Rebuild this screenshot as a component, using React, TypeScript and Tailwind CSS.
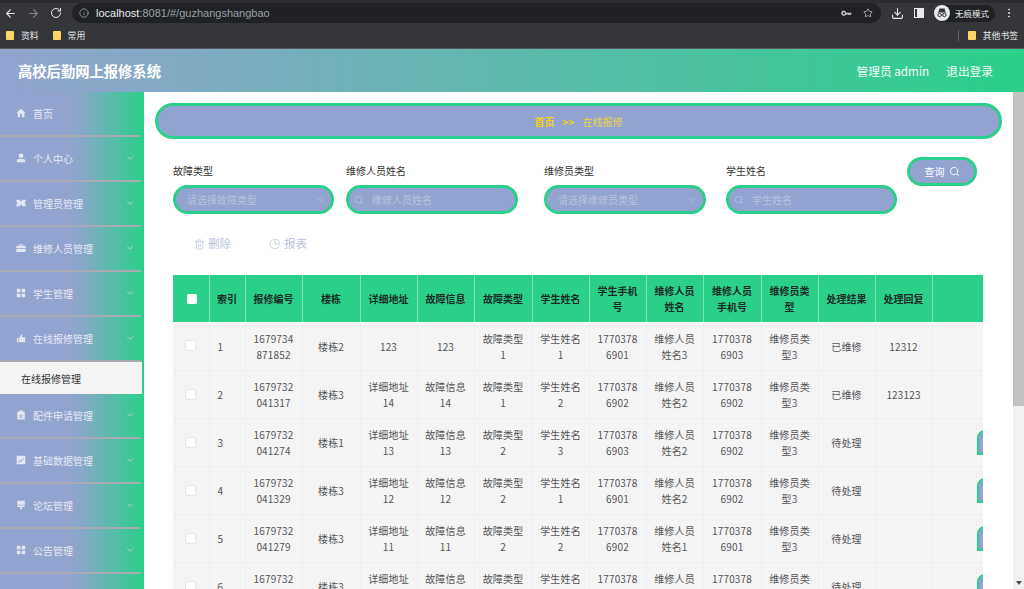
import React from "react";
import {
  ArrowLeft,
  ArrowRight,
  RotateCw,
  Info,
  Star,
  Download,
  EllipsisVertical,
  ChevronDown,
  Search,
  Trash2,
  PieChart,
} from "lucide-react";

const FONT = "font-['Microsoft_YaHei','Noto_Sans_CJK_SC','Noto_Sans',sans-serif]";

// solid little menu icons
const HomeIcon = () => (
  <svg viewBox="0 0 12 12" className="w-[10px] h-[10px] fill-[#e4e7f2]">
    <path d="M6 1 L11.5 6 L10 6 L10 11 L7.2 11 L7.2 7.5 L4.8 7.5 L4.8 11 L2 11 L2 6 L.5 6 Z" />
  </svg>
);
const UserIcon = () => (
  <svg viewBox="0 0 12 12" className="w-[10px] h-[10px] fill-[#e4e7f2]">
    <circle cx="6" cy="3.4" r="2.9" />
    <path d="M1 11 L1 9 Q1 7.2 3 7.2 L9 7.2 Q11 7.2 11 9 L11 11 Z" />
  </svg>
);
const AdminIcon = () => (
  <svg viewBox="0 0 12 12" className="w-[10px] h-[10px] fill-[#e4e7f2]">
    <path d="M0 2 L4 2 L6 4.5 L8 2 L12 2 L10.5 6 L12 10 L8 10 L6 7.5 L4 10 L0 10 L1.5 6 Z" />
  </svg>
);
const CaseIcon = () => (
  <svg viewBox="0 0 12 12" className="w-[10px] h-[10px] fill-[#e4e7f2]">
    <path d="M4 1.5 L8 1.5 L8 3.2 L11.5 3.2 L11.5 6.4 L.5 6.4 L.5 3.2 L4 3.2 Z M5 2.4 L5 3.2 L7 3.2 L7 2.4 Z" fillRule="evenodd" />
    <rect x=".5" y="7.2" width="11" height="3.6" />
  </svg>
);
const GridIcon = () => (
  <svg viewBox="0 0 12 12" className="w-[10px] h-[10px] fill-[#e4e7f2]">
    <rect x="1" y="1" width="4.2" height="4.2" />
    <rect x="6.8" y="1" width="4.2" height="4.2" />
    <rect x="1" y="6.8" width="4.2" height="4.2" />
    <rect x="6.8" y="6.8" width="4.2" height="4.2" />
  </svg>
);
const ThumbIcon = () => (
  <svg viewBox="0 0 12 12" className="w-[10px] h-[10px] fill-[#e4e7f2]">
    <path d="M1 6 L3 6 L3 11 L1 11 Z M3.8 6 L6.5 1.5 L7.6 2.2 L7.2 5 L11 5 L11 11 L3.8 11 Z" />
  </svg>
);
const ClipIcon = () => (
  <svg viewBox="0 0 12 12" className="w-[10px] h-[10px] fill-[#e4e7f2]">
    <path d="M4 .5 L8 .5 L8 2 L10.5 2 L10.5 11.5 L1.5 11.5 L1.5 2 L4 2 Z M4.4 5.4 L6 7 L7.6 5.4 L8.2 6 L6.6 7.6 L8.2 9.2 L7.6 9.8 L6 8.2 L4.4 9.8 L3.8 9.2 L5.4 7.6 L3.8 6 Z" fillRule="evenodd" />
  </svg>
);
const ChartIcon = () => (
  <svg viewBox="0 0 12 12" className="w-[10px] h-[10px] fill-[#e4e7f2]">
    <path d="M.8 1 L11.2 1 L11.2 11 L.8 11 Z M2.5 8.6 L3 9.2 L5 7.2 L6.4 8.2 L9.6 4.6 L9 4 L6.3 7 L5 6 Z" fillRule="evenodd" />
  </svg>
);
const BoardIcon = () => (
  <svg viewBox="0 0 12 12" className="w-[10px] h-[10px] fill-[#e4e7f2]">
    <rect x="1.5" y=".8" width="9" height="5" />
    <rect x="1.5" y="6.6" width="9" height="1.8" />
    <rect x="5" y="8.4" width="2" height="3" />
  </svg>
);

// chrome's saved password key, lying on its side
const KeyIcon = () => (
  <svg viewBox="0 0 12 8" className="w-[11px] h-[7px] ml-auto fill-[#c4c7c5]">
    <path d="M3 .5 A3 3 0 1 0 5.6 5 L7.5 5 L8.5 6 L9.5 5 L10.5 6 L12 4 L10.8 3 L5.6 3 A3 3 0 0 0 3 .5 Z M3 2.5 A1.3 1.3 0 1 1 3 5.1 A1.3 1.3 0 1 1 3 2.5 Z" fillRule="evenodd" />
  </svg>
);

const IncognitoIcon = () => (
  <svg viewBox="0 0 16 16" className="w-[16px] h-[16px]">
    <circle cx="8" cy="8" r="8" fill="#e8eaed" />
    <path d="M5.4 3.6 L10.6 3.6 L11.4 6.8 L13 7.4 L3 7.4 L4.6 6.8 Z" fill="#35363a" />
    <circle cx="5.6" cy="10" r="1.7" fill="none" stroke="#35363a" strokeWidth="1" />
    <circle cx="10.4" cy="10" r="1.7" fill="none" stroke="#35363a" strokeWidth="1" />
    <path d="M7.2 10 L8.8 10" stroke="#35363a" strokeWidth="1" />
  </svg>
);

const menu = [
  { label: "首页", icon: HomeIcon, arrow: false },
  { label: "个人中心", icon: UserIcon, arrow: true },
  { label: "管理员管理", icon: AdminIcon, arrow: true },
  { label: "维修人员管理", icon: CaseIcon, arrow: true },
  { label: "学生管理", icon: GridIcon, arrow: true },
  { label: "在线报修管理", icon: ThumbIcon, arrow: true, sub: "在线报修管理" },
  { label: "配件申请管理", icon: ClipIcon, arrow: true },
  { label: "基础数据管理", icon: ChartIcon, arrow: true },
  { label: "论坛管理", icon: BoardIcon, arrow: true },
  { label: "公告管理", icon: GridIcon, arrow: true },
];

const columns = [
  { w: "w-[57px]", label: "报修编号" },
  { w: "w-[58px]", label: "楼栋" },
  { w: "w-[57px]", label: "详细地址" },
  { w: "w-[57px]", label: "故障信息" },
  { w: "w-[58px]", label: "故障类型" },
  { w: "w-[57px]", label: "学生姓名" },
  { w: "w-[57px]", label: "学生手机号" },
  { w: "w-[57px]", label: "维修人员姓名" },
  { w: "w-[58px]", label: "维修人员手机号" },
  { w: "w-[57px]", label: "维修员类型" },
  { w: "w-[57px]", label: "处理结果" },
  { w: "w-[57px]", label: "处理回复" },
];

const rows = [
  ["1679734871852", "楼栋2", "123", "123", "故障类型1", "学生姓名1", "17703786901", "维修人员姓名3", "17703786903", "维修员类型3", "已维修", "12312"],
  ["1679732041317", "楼栋3", "详细地址14", "故障信息14", "故障类型1", "学生姓名2", "17703786902", "维修人员姓名2", "17703786902", "维修员类型3", "已维修", "123123"],
  ["1679732041274", "楼栋1", "详细地址13", "故障信息13", "故障类型2", "学生姓名3", "17703786903", "维修人员姓名2", "17703786902", "维修员类型3", "待处理", ""],
  ["1679732041329", "楼栋3", "详细地址12", "故障信息12", "故障类型2", "学生姓名1", "17703786901", "维修人员姓名2", "17703786902", "维修员类型3", "待处理", ""],
  ["1679732041279", "楼栋3", "详细地址11", "故障信息11", "故障类型2", "学生姓名2", "17703786902", "维修人员姓名1", "17703786901", "维修员类型3", "待处理", ""],
  ["1679732041226", "楼栋3", "详细地址10", "故障信息10", "故障类型2", "学生姓名1", "17703786901", "维修人员姓名1", "17703786901", "维修员类型3", "待处理", ""],
];

const BrowserBar = () => (
  <div className="h-[49px] shrink-0 bg-[#35363a] flex flex-col border-b border-[#5a5b5f]">
    <div className="h-[3px] bg-[#2b2c30]" />
    <div className="h-[20px] flex items-center pl-[4px] pr-[9px]">
      <ArrowLeft className="w-[13px] h-[13px] text-[#e8eaed]" />
      <ArrowRight className="w-[13px] h-[13px] text-[#85868a] ml-[10px]" />
      <RotateCw className="w-[12px] h-[12px] text-[#e8eaed] ml-[10px]" />
      <div className="ml-[10px] grow h-[20px] rounded-full bg-[#202124] flex items-center pl-[7px] pr-[8px]">
        <Info className="w-[10px] h-[10px] text-[#9aa0a6]" />
        <span className="ml-[7px] text-[11px] text-[#9aa0a6] font-['Liberation_Sans',sans-serif]">
          <span className="text-[#e8eaed]">localhost</span>:8081/#/guzhangshangbao
        </span>
        <KeyIcon />
        <Star className="w-[10px] h-[10px] text-[#c4c7c5] ml-[11px]" />
      </div>
      <Download className="w-[13px] h-[13px] text-[#e8eaed] ml-[10px]" />
      <div className="w-[10px] h-[10px] border border-[#e8eaed] ml-[10px] flex justify-end">
        <div className="w-[6px] bg-[#e8eaed]" />
      </div>
      <div className="ml-[10px] h-[17px] pr-[6px] rounded-full bg-[#202124] flex items-center">
        <IncognitoIcon />
        <span className="ml-[5px] text-[8.5px] text-[#e8eaed]">无痕模式</span>
      </div>
      <EllipsisVertical className="w-[12px] h-[12px] text-[#e8eaed] ml-[8px]" />
    </div>
    <div className="grow flex items-center pl-[6px] pr-[6px] text-[8.8px] text-[#e8eaed]">
      <div className="w-[8px] h-[9px] bg-[#fdd663] rounded-[1px]" />
      <span className="ml-[7px]">资料</span>
      <div className="w-[8px] h-[9px] bg-[#fdd663] rounded-[1px] ml-[14px]" />
      <span className="ml-[7px]">常用</span>
      <div className="ml-auto w-px h-[11px] bg-[#5f6368]" />
      <div className="w-[8px] h-[9px] bg-[#fdd663] rounded-[1px] ml-[9px]" />
      <span className="ml-[7px]">其他书签</span>
    </div>
  </div>
);

const Sidebar = () => (
  <aside className="w-[145px] shrink-0 overflow-hidden border-r border-white bg-[linear-gradient(90deg,#93a3cf_50%,#2ad08a_100%)]">
    {menu.map((item) => (
      <div key={item.label}>
        <div className="h-[45px] pr-[3px]">
          <div className="h-full flex items-center pl-[16px] pr-[6px] pb-[1px] border-b-2 border-[#a9abb3] text-[10px] text-[#e8eaf5]">
            <item.icon />
            <span className="ml-[7px]">{item.label}</span>
            {item.arrow && <ChevronDown className="w-[10px] h-[10px] ml-auto text-[#c9d6dc]" />}
          </div>
        </div>
        {item.sub && (
          <div className="h-[32px] mr-[2px] flex items-center pl-[21px] bg-[#f4f4f5] text-[10px] text-[#333]">
            {item.sub}
          </div>
        )}
      </div>
    ))}
  </aside>
);

const SearchField = ({ label, w, ph, select }: { label: string; w: string; ph: string; select?: boolean }) => (
  <div className={w}>
    <div className="text-[10px] leading-[14px] text-[#333]">{label}</div>
    <div className="mt-[7px] h-[29px] rounded-full border-[3px] border-[#2ad08a] bg-[#93a3cf] flex items-center px-[5px] text-[10px] text-[#b8c2df]">
      {select ? (
        <>
          <span className="ml-[6px]">{ph}</span>
          <ChevronDown className="w-[11px] h-[11px] ml-auto text-[#b8c2df]" />
        </>
      ) : (
        <>
          <Search className="w-[10px] h-[10px] text-[#b8c2df]" />
          <span className="ml-[8px]">{ph}</span>
        </>
      )}
    </div>
  </div>
);

const Checkbox = ({ head }: { head?: boolean }) => (
  <div
    className={`bg-white rounded-[2px] ${
      head ? "ml-[14px] w-[10px] h-[10px]" : "mx-auto w-[11px] h-[11px] border border-[#e4e7ed]"
    }`}
  />
);

export default function App() {
  return (
    <div className={`h-[589px] w-[1024px] overflow-hidden flex flex-col bg-white ${FONT}`}>
      <BrowserBar />

      <header className="h-[43px] shrink-0 flex items-center justify-between pl-[18px] pr-[31px] bg-[linear-gradient(90deg,#93a3cf,#2ad08a)] text-white">
        <div className="text-[14.3px] font-bold">高校后勤网上报修系统</div>
        <div className="flex items-center gap-[17px] text-[11.7px] text-[#f2fbf7]">
          <span>管理员 admin</span>
          <span>退出登录</span>
        </div>
      </header>

      <div className="grow min-h-0 flex">
        <Sidebar />

        <main className="w-[868px] shrink-0 overflow-hidden pt-[11px] pl-[10px]">
          <div className="w-[847px] h-[36px] rounded-full border-[3px] border-[#2ad08a] bg-[#93a3cf] flex items-center justify-center text-[10px] font-bold text-[#f2d21b]">
            <span>首页</span>
            <span className="mx-[8px]">&gt;&gt;</span>
            <span className="font-normal text-[#ecd340]">在线报修</span>
          </div>

          <div className="mt-[18px] ml-[18px] flex items-start">
            <div className="mt-[7px] flex gap-[12px]">
              <SearchField label="故障类型" w="w-[161px]" ph="请选择故障类型" select />
              <SearchField label="维修人员姓名" w="w-[172px]" ph="维修人员姓名" />
              <SearchField label="维修员类型" w="w-[162px] ml-[14px]" ph="请选择维修员类型" select />
              <SearchField label="学生姓名" w="w-[171px] ml-[8px]" ph="学生姓名" />
            </div>
            <div className="ml-[10px] w-[70px] h-[29px] rounded-full border-[3px] border-[#2ad08a] bg-[#93a3cf] flex items-center justify-center gap-[4px] text-[10px] text-white">
              查询
              <Search className="w-[11px] h-[11px]" />
            </div>
          </div>

          <div className="mt-[22px] ml-[39px] h-[16px] flex items-center text-[11.5px] text-[#b5bfdf]">
            <Trash2 className="w-[11px] h-[11px]" strokeWidth={1.5} />
            <span className="ml-[3px]">删除</span>
            <PieChart className="w-[12px] h-[12px] ml-[38px]" strokeWidth={1.5} />
            <span className="ml-[3px]">报表</span>
          </div>

          <table className="mt-[23px] ml-[18px] w-[810px] table-fixed border-collapse text-[10px] leading-[16px] text-center">
            <thead>
              <tr className="h-[47px] bg-[#2ad08a] text-[#1a2b25] font-bold">
                <th className="w-[36px] border-r border-[#7fe3b8]">
                  <Checkbox head />
                </th>
                <th className="w-[36px] border-r border-[#7fe3b8]">索引</th>
                {columns.map((c) => (
                  <th key={c.label} className={`${c.w} px-[7px] border-r border-[#7fe3b8]`}>
                    {c.label}
                  </th>
                ))}
                <th className="w-[51px]" />
              </tr>
            </thead>
            <tbody>
              {rows.map((row, i) => (
                <tr key={row[0]} className="h-[48px] bg-[#f4f4f5] text-[#555] tracking-[0.15px]">
                  <td className="border-r border-b border-[#ebeef5]">
                    <Checkbox />
                  </td>
                  <td className="border-r border-b border-[#ebeef5] text-left pl-[8px] pt-[2px]">{i + 1}</td>
                  {row.map((val, j) => (
                    <td key={j} className="px-[7px] pt-[2px] border-r border-b border-[#ebeef5] break-all">
                      {val}
                    </td>
                  ))}
                  <td className="border-b border-[#ebeef5] overflow-hidden">
                    {i > 1 && (
                      <div className="ml-[44px] w-[40px] h-[25px] rounded-tl-[8px] border-[2px] border-[#2ad08a] bg-[#93a3cf]" />
                    )}
                  </td>
                </tr>
              ))}
            </tbody>
          </table>
        </main>

        <div className="grow flex flex-col bg-[#f1f1f1]">
          <div className="h-[314px] bg-[#c1c1c1]" />
          <div className="mt-auto h-[12px] flex items-center justify-center">
            <div className="w-0 h-0 border-x-[3px] border-x-transparent border-t-[4px] border-t-[#505050]" />
          </div>
        </div>
      </div>
    </div>
  );
}
